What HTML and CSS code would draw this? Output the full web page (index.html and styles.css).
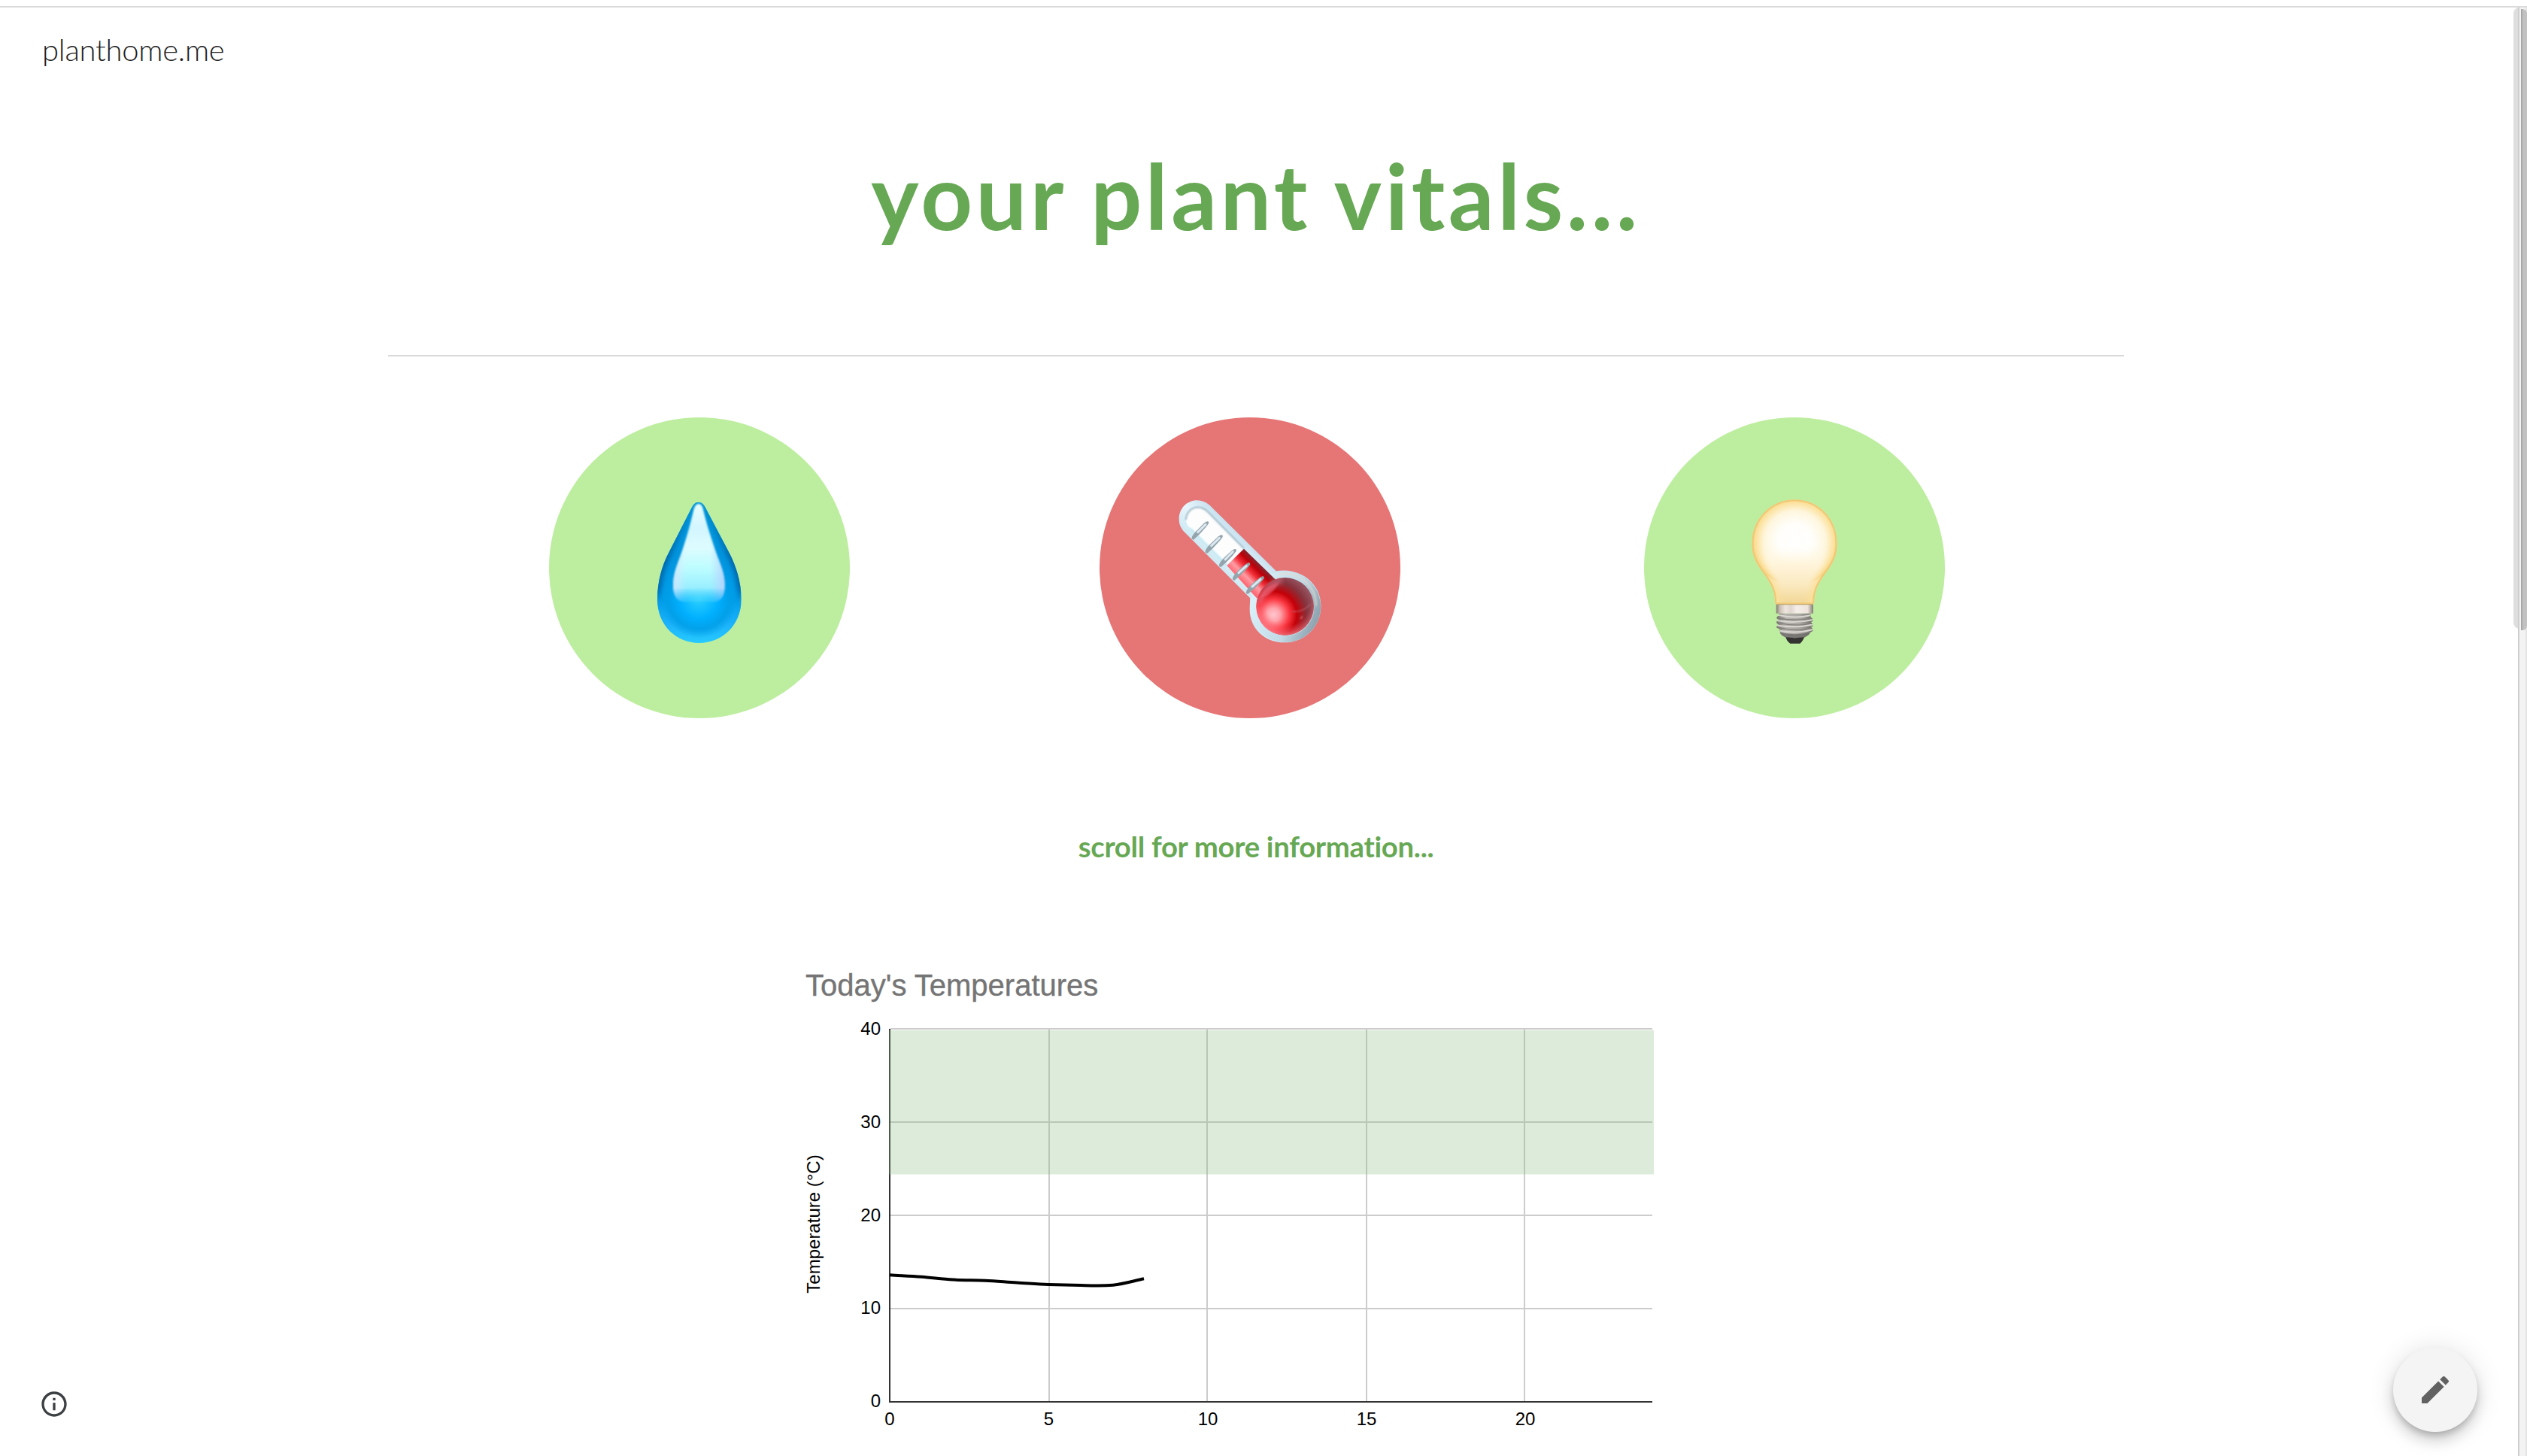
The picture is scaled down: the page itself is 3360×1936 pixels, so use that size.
FILE: index.html
```html
<!DOCTYPE html>
<html lang="en">
<head>
<meta charset="utf-8">
<title>planthome.me</title>
<link rel="stylesheet" href="styles.css">
</head>
<body>
<div class="page">
  <header class="site-header"><a class="site-name">planthome.me</a></header>
  <main class="content">
    <h1 class="title">your plant vitals...</h1>
    <hr class="divider">
    <section class="vitals">
      <div class="vital vital-ok">
        <svg class="vital-art" viewBox="90 75 1200 1200">
          <defs>
            <linearGradient id="dropBase" x1="0" y1="0" x2="0" y2="1">
              <stop offset="0" stop-color="#009ee0"/><stop offset=".35" stop-color="#0094dd"/><stop offset=".68" stop-color="#009ce8"/><stop offset=".85" stop-color="#1cb2fb"/><stop offset="1" stop-color="#27cdff"/>
            </linearGradient>
            <linearGradient id="dropSide" x1="0" y1="0" x2="0" y2="1">
              <stop offset="0" stop-color="#0078bd" stop-opacity=".2"/><stop offset=".4" stop-color="#0065a8"/><stop offset=".62" stop-color="#0068ac"/><stop offset=".78" stop-color="#1cb2fb" stop-opacity="0"/>
            </linearGradient>
            <radialGradient id="dropCore" gradientUnits="userSpaceOnUse" cx="688" cy="800" r="155">
              <stop offset="0" stop-color="#2bd0ff"/><stop offset=".5" stop-color="#00b0ff"/><stop offset=".78" stop-color="#009fe8" stop-opacity=".9"/><stop offset="1" stop-color="#009fe8" stop-opacity="0"/>
            </radialGradient>
            <linearGradient id="dropShine" x1="0" y1="0" x2="0" y2="1">
              <stop offset="0" stop-color="#e8fcff"/><stop offset=".25" stop-color="#d3f6ff"/><stop offset=".45" stop-color="#ddfcff"/><stop offset=".65" stop-color="#bdfdff"/><stop offset=".85" stop-color="#9aefff"/><stop offset="1" stop-color="#4cd6fc"/>
            </linearGradient>
            <linearGradient id="dropShineEdge" x1="0" y1="0" x2="1" y2="0">
              <stop offset="0" stop-color="#d9e4ff" stop-opacity=".8"/><stop offset=".25" stop-color="#d9e4ff" stop-opacity="0"/><stop offset=".72" stop-color="#b9d0ff" stop-opacity="0"/><stop offset="1" stop-color="#b9d0ff" stop-opacity=".9"/>
            </linearGradient>
            <linearGradient id="dropFade" gradientUnits="userSpaceOnUse" x1="0" y1="755" x2="0" y2="814">
              <stop offset="0" stop-color="#fff"/><stop offset="1" stop-color="#fff" stop-opacity=".3"/>
            </linearGradient>
            <mask id="dropFadeMask" maskUnits="userSpaceOnUse" x="560" y="400" width="260" height="430"><rect x="560" y="400" width="260" height="430" fill="url(#dropFade)"/></mask>
            <clipPath id="dropClip"><path d="M686 413C699 413 707 421 714 435L806 610C839 672 857 735 857 802C857 905 780 975 689 975C598 975 522 905 522 802C522 735 537 672 570 610L659 435C666 421 674 413 686 413Z"/></clipPath>
            <filter id="soft6"><feGaussianBlur stdDeviation="9"/></filter>
            <filter id="soft2"><feGaussianBlur stdDeviation="2.500"/></filter>
          </defs>
          <g clip-path="url(#dropClip)">
            <rect x="515" y="405" width="350" height="580" fill="url(#dropBase)"/>
            <path d="M686 413C699 413 707 421 714 435L806 610C839 672 857 735 857 802C857 905 780 975 689 975C598 975 522 905 522 802C522 735 537 672 570 610L659 435C666 421 674 413 686 413Z" fill="none" stroke="url(#dropSide)" stroke-width="26" filter="url(#soft6)"/>
            <circle cx="688" cy="800" r="155" fill="url(#dropCore)"/>
          </g>
          <g mask="url(#dropFadeMask)">
            <g filter="url(#soft2)">
              <path d="M686 420C697 420 702 430 705 444C718 500 738 560 762 630C780 675 791 705 791 745C791 790 776 812 740 812H636C601 812 585 790 585 745C585 705 596 675 613 630C638 560 654 500 667 444C671 430 677 420 686 420Z" fill="url(#dropShine)"/>
              <path d="M686 420C697 420 702 430 705 444C718 500 738 560 762 630C780 675 791 705 791 745C791 790 776 812 740 812H636C601 812 585 790 585 745C585 705 596 675 613 630C638 560 654 500 667 444C671 430 677 420 686 420Z" fill="url(#dropShineEdge)"/>
            </g>
          </g>
        </svg>
      </div>
      <div class="vital vital-alert">
        <svg class="vital-art" viewBox="66 75 1200 1200">
          <defs>
            <linearGradient id="glass" gradientUnits="userSpaceOnUse" x1="520" y1="640" x2="620" y2="540">
              <stop offset="0" stop-color="#cfeaf4"/><stop offset=".5" stop-color="#e9f6fc"/><stop offset="1" stop-color="#c9e2f0"/>
            </linearGradient>
            <linearGradient id="bulbGlass" gradientUnits="userSpaceOnUse" x1="690" y1="790" x2="930" y2="880">
              <stop offset="0" stop-color="#d8eff8"/><stop offset=".6" stop-color="#c0d9e5"/><stop offset="1" stop-color="#90a5b1"/>
            </linearGradient>
            <linearGradient id="mercury" gradientUnits="userSpaceOnUse" x1="617" y1="710" x2="705" y2="622">
              <stop offset="0" stop-color="#ff6a74"/><stop offset=".2" stop-color="#ff9ca4"/><stop offset=".4" stop-color="#f22e37"/><stop offset=".6" stop-color="#bd0008"/><stop offset=".84" stop-color="#70333c"/><stop offset="1" stop-color="#a34d5b"/>
            </linearGradient>
            <radialGradient id="ball" gradientUnits="userSpaceOnUse" cx="760" cy="862" r="185">
              <stop offset="0" stop-color="#ffc6cd"/><stop offset=".14" stop-color="#ffa5ad"/><stop offset=".34" stop-color="#fa3640"/><stop offset=".5" stop-color="#c40008"/><stop offset=".72" stop-color="#86333d"/><stop offset="1" stop-color="#9b6673"/>
            </radialGradient>
            <radialGradient id="ballRim" gradientUnits="userSpaceOnUse" cx="815" cy="810" r="135">
              <stop offset=".68" stop-color="#ff5963" stop-opacity="0"/><stop offset="1" stop-color="#ff8591"/>
            </radialGradient>
            <filter id="soft3"><feGaussianBlur stdDeviation="2.5"/></filter>
            <filter id="soft8"><feGaussianBlur stdDeviation="9"/></filter>
          </defs>
          <path d="M455 406C480 406 497 417 512 432L770 688C865 672 949 735 949 827C949 910 885 973 803 973C723 973 665 915 665 842C665 824 667 810 666 795L404 532C390 517 383 502 383 480C383 438 415 406 455 406Z" fill="url(#glass)"/>
          <circle cx="807" cy="831" r="128" fill="none" stroke="url(#bulbGlass)" stroke-width="26"/>
          <path d="M778 702C855 684 930 740 930 827" fill="none" stroke="#e6d9cf" stroke-width="6" opacity=".8" filter="url(#soft3)"/>
          <path d="M458 434C475 434 487 441 498 452L640 596L575 664L428 517C417 506 411 496 411 482C411 455 432 434 458 434Z" fill="#fdfdfe"/>
          <path d="M411 484C411 455 432 434 458 434C475 434 487 441 498 452L642 598" fill="none" stroke="#8fadbb" stroke-width="5" filter="url(#soft3)"/>
          <path d="M428 517L575 664" fill="none" stroke="#b9e7f1" stroke-width="6" filter="url(#soft3)"/>
          <path d="M642 599L768 722L694 797L574 666Z" fill="url(#mercury)"/>
          <circle cx="806" cy="829" r="115" fill="url(#ball)"/>
          <circle cx="806" cy="829" r="115" fill="url(#ballRim)" opacity=".75"/>
          <path d="M704 815C716 772 750 735 794 724" fill="none" stroke="#f0849c" stroke-width="17" opacity=".65" filter="url(#soft8)"/>
          <path d="M706 795C720 760 747 740 781 735C763 768 742 787 706 795Z" fill="#ef6b7e" opacity=".55" filter="url(#soft3)"/>
          <path d="M834 849C860 855 890 840 908 820" fill="none" stroke="#c27480" stroke-width="4" opacity=".7" filter="url(#soft3)"/>
          <path d="M866 880L877 868" stroke="#d96f70" stroke-width="7" opacity=".7" filter="url(#soft3)"/>
          <g>
            <g fill="#94a4ac"><path d="M434 560C432 548 446 534 458 522L484 496C495 487 504 488 501 498C487 520 454 552 441 563Z"/><path d="M488 614C486 602 500 588 512 576L540 550C551 541 560 542 557 552C542 574 509 606 496 617Z"/><path d="M543 669C541 657 555 643 567 631L594 606C605 597 614 598 611 608C597 630 563 661 550 672Z"/><path d="M597 722C595 710 609 696 621 684L650 660C661 652 669 653 666 663C651 685 617 714 604 725Z"/><path d="M651 777C649 765 663 751 675 739L706 713C717 706 725 707 722 717C706 740 671 769 658 780Z"/></g>
            <g stroke="#dbe8f0" stroke-width="9" stroke-linecap="round"><path d="M458 533L489 502"/><path d="M512 587L544 556"/><path d="M567 642L598 611"/><path d="M621 695L652 667"/><path d="M675 750L708 721"/></g>
          </g>
        </svg>
      </div>
      <div class="vital vital-ok">
        <svg class="vital-art" viewBox="78 75 1200 1200">
          <defs>
            <radialGradient id="glow" gradientUnits="userSpaceOnUse" cx="680" cy="570" r="175">
              <stop offset="0" stop-color="#ffffff"/><stop offset=".4" stop-color="#fffefb"/><stop offset=".7" stop-color="#fef6dd"/><stop offset=".9" stop-color="#fbe09a"/><stop offset="1" stop-color="#f5cd77"/>
            </radialGradient>
            <linearGradient id="neck" gradientUnits="userSpaceOnUse" x1="0" y1="590" x2="0" y2="820">
              <stop offset="0" stop-color="#fffaec" stop-opacity="0"/><stop offset=".3" stop-color="#fff5dc"/><stop offset=".65" stop-color="#fbeac2"/><stop offset="1" stop-color="#f1d592"/>
            </linearGradient>
            <linearGradient id="collar" x1="0" y1="0" x2="1" y2="0">
              <stop offset="0" stop-color="#847d70"/><stop offset=".1" stop-color="#c9bfb4"/><stop offset=".25" stop-color="#efe7df"/><stop offset=".4" stop-color="#dfd6ce"/><stop offset=".55" stop-color="#f5eee8"/><stop offset=".85" stop-color="#eee4dc"/><stop offset="1" stop-color="#837b70"/>
            </linearGradient>
            <linearGradient id="screw" x1="0" y1="0" x2="1" y2="0">
              <stop offset="0" stop-color="#77736d"/><stop offset=".25" stop-color="#b7b4af"/><stop offset=".65" stop-color="#aaa6a1"/><stop offset="1" stop-color="#716e69"/>
            </linearGradient>
            <clipPath id="lampClip"><path id="lamp" d="M679 403C775 403 848 480 848 580C848 622 834 652 809 687C777 730 757 762 757 810C757 817 754 821 747 821H609C602 821 600 817 600 810C600 762 579 730 547 687C522 652 508 622 508 580C508 480 583 403 679 403Z"/></clipPath>
            <filter id="soft10" x="-30%" y="-30%" width="160%" height="160%"><feGaussianBlur stdDeviation="12"/></filter>
            <filter id="softLine"><feGaussianBlur stdDeviation="1.6"/></filter>
          </defs>
          <g clip-path="url(#lampClip)">
            <rect x="500" y="395" width="356" height="430" fill="#fbe09b"/>
            <circle cx="679" cy="575" r="171" fill="url(#glow)"/>
            <path d="M540 600H816C800 665 741 720 733 830H624C616 720 556 665 540 600Z" fill="url(#neck)" filter="url(#soft10)"/>
            <use href="#lamp" fill="none" stroke="#f0c876" stroke-width="13" filter="url(#softLine)"/>
          </g>
          <path d="M605 821H753V857H605Z" fill="url(#collar)"/>
          <path d="M606 821H752" stroke="#c3aa71" stroke-width="4"/>
          <path d="M616 857H742L743 872Q752 876 751 888L743 892Q752 896 751 908L743 911Q752 915 751 927L742 932L733 942L715 954H645L628 945Q618 937 618 919L607 914Q605 906 615 902L607 896Q605 886 615 882L607 877Q605 869 616 866Z" fill="url(#screw)"/>
          <g fill="none" stroke-linecap="round" filter="url(#softLine)">
            <path d="M613 876Q680 888 746 878M613 895Q680 909 746 899M613 914Q680 929 746 918" stroke="#827e79" stroke-width="4"/>
            <path d="M618 864Q680 879 740 865M612 886Q680 898 748 883M612 905Q680 916 748 902M622 927Q690 938 748 922" stroke="#d9d6d1" stroke-width="6"/>
          </g>
          <path d="M620 934Q680 945 741 934Q735 946 715 954H645Q626 945 620 934Z" fill="#6b6a68" opacity=".8"/>
          <path d="M643 952Q680 957 717 952C713 963 706 973 700 977H661C653 972 646 963 643 952Z" fill="#343331"/>
        </svg>
      </div>
    </section>
    <p class="hint">scroll for more information...</p>
    <figure class="chart">
      <svg class="chart-svg" viewBox="1040 1260 1200 676">
        <text class="chart-title" x="1071" y="1323.500">Today's Temperatures</text>
        <g class="grid">
          <path d="M1184 1368H2197M1184 1492H2197M1184 1616H2197M1184 1740H2197"/>
          <path d="M1395 1369V1863M1605 1369V1863M1817 1369V1863M2027 1369V1863"/>
        </g>
        <path class="axis" d="M1183 1368V1865M1183 1864H2197"/>
        <rect class="ideal-range" x="1182" y="1370" width="1017" height="191.5"/>
        <path class="series" d="M1183 1695.3C1197 1696.2 1210 1696.600 1225 1697.800C1239 1698.800 1253 1700.900 1267 1701.600C1281 1702.400 1296 1702.100 1310 1702.700C1324 1703.300 1338 1704.600 1352 1705.400C1366 1706.200 1380 1707.300 1394 1707.900C1408 1708.400 1423 1708.800 1437 1709.100C1451 1709.400 1466 1710 1480 1708.800C1494 1707.300 1507 1703.300 1521 1700.300"/>
        <g class="tick tick-y">
          <text x="1171" y="1375.5">40</text><text x="1171" y="1499.5">30</text><text x="1171" y="1623.500">20</text><text x="1171" y="1747">10</text><text x="1171" y="1871">0</text>
        </g>
        <g class="tick tick-x">
          <text x="1183" y="1895">0</text><text x="1394.5" y="1895">5</text><text x="1606" y="1895">10</text><text x="1817" y="1895">15</text><text x="2028" y="1895">20</text>
        </g>
        <text class="axis-title" transform="translate(1090 1627.500) rotate(-90)">Temperature (°C)</text>
      </svg>
    </figure>
  </main>
</div>
<button class="info" aria-label="Site information">
  <svg viewBox="0 0 24 24" width="40" height="40"><path fill="#3c4043" d="M11 7h2v2h-2zm0 4h2v6h-2zm1-9C6.480 2 2 6.480 2 12s4.480 10 10 10 10-4.480 10-10S17.520 2 12 2zm0 18c-4.410 0-8-3.590-8-8s3.590-8 8-8 8 3.590 8 8-3.590 8-8 8z"/></svg>
</button>
<button class="edit" aria-label="Edit">
  <svg viewBox="0 0 24 24" width="48" height="48"><path fill="#616161" d="M3 17.250V21h3.750L17.810 9.940l-3.750-3.750L3 17.250zM20.710 7.040c.39-.39.39-1.020 0-1.410l-2.340-2.340c-.39-.39-1.020-.39-1.410 0l-1.830 1.830 3.750 3.750 1.830-1.830z"/></svg>
</button>
<div class="scrollbar"><div class="scrollbar-thumb inner-thumb"></div><div class="track"></div><div class="scrollbar-thumb outer-thumb"></div></div>
</body>
</html>
```
FILE: styles.css
```css
* { box-sizing: border-box; }
body {
  margin: 0;
  height: 1936px;
  overflow: hidden;
  background: #fff;
  font-family: Lato, "Liberation Sans", sans-serif;
}
.page {
  height: 1928px;
  margin-top: 8px;
  border-top: 2px solid #dadada;
  overflow: hidden;
}
.site-header { padding: 32px 56px 0; height: 112px; }
.site-name {
  font-size: 40px;
  font-weight: 300;
  line-height: 48px;
  letter-spacing: -0.25px;
  color: #212121;
}
.content { width: 3340px; display: flex; flex-direction: column; align-items: center; }
.title {
  margin: 66px 0 0;
  height: 284px;
  font-size: 120px;
  font-weight: 700;
  line-height: 144px;
  letter-spacing: 4.5px;
  color: #67a854;
}
.divider { width: 2308px; height: 2px; margin: 0; border: 0; background: #dadada; }
.vitals { display: flex; padding: 81px 24px 0 0; }
.vital { width: 400px; height: 400px; border-radius: 50%; }
.vital + .vital { margin-left: 332px; }
.vital + .vital:last-child { margin-left: 324px; }
.vital-ok { background: #bdee9f; }
.vital-alert { background: #e67575; }
.vital-art { display: block; width: 400px; height: 400px; }
.hint {
  margin: 146px 0 0;
  height: 159px;
  font-size: 38.3px;
  font-weight: 700;
  line-height: 48px;
  letter-spacing: -0.3px;
  font-variant-ligatures: none;
  color: #67a854;
}
.chart { margin: 0 60px 0 0; }
.chart-svg { display: block; width: 1200px; height: 676px; font-family: "Liberation Sans", Arial, sans-serif; }
.chart-title { font-size: 40px; fill: #757575; stroke: #757575; stroke-width: .4px; }
.grid { stroke: #ccc; stroke-width: 2; }
.axis { stroke: #333; stroke-width: 2; fill: none; }
.ideal-range { fill: rgba(143, 192, 132, .3); }
.series { fill: none; stroke: #000; stroke-width: 4; }
.tick { font-size: 24px; fill: #000; }
.tick-y { text-anchor: end; }
.tick-x, .axis-title { text-anchor: middle; }
.axis-title { font-size: 24px; fill: #000; }
.info, .edit { position: fixed; padding: 0; border: 0; background: none; }
.info { left: 52px; top: 1847px; width: 40px; height: 40px; }
.info svg { display: block; }
.edit {
  left: 3182px;
  top: 1792px;
  width: 112px;
  height: 112px;
  display: flex;
  align-items: center;
  justify-content: center;
  border-radius: 50%;
  background: #f4f4f4;
  box-shadow: 0 6px 10px -2px rgba(0, 0, 0, .2), 0 12px 20px rgba(0, 0, 0, .14), 0 2px 36px rgba(0, 0, 0, .12);
}
.scrollbar { position: fixed; top: 10px; right: 0; width: 18px; height: 1926px; }
.track {
  position: absolute;
  left: 6px;
  width: 12px;
  height: 100%;
  border-left: 2px solid #cecece;
  border-right: 2px solid #e4e4e4;
  background: #f3f3f3;
}
.scrollbar-thumb { position: absolute; top: 0; height: 826px; }
.inner-thumb { left: 0; width: 8px; border-radius: 8px 0 0 8px; background: #dedede; }
.outer-thumb { left: 10px; top: 2px; width: 8px; border-left: 2px solid #a8a8a8; border-radius: 0 6px 6px 0; background: #c1c1c1; }
```
